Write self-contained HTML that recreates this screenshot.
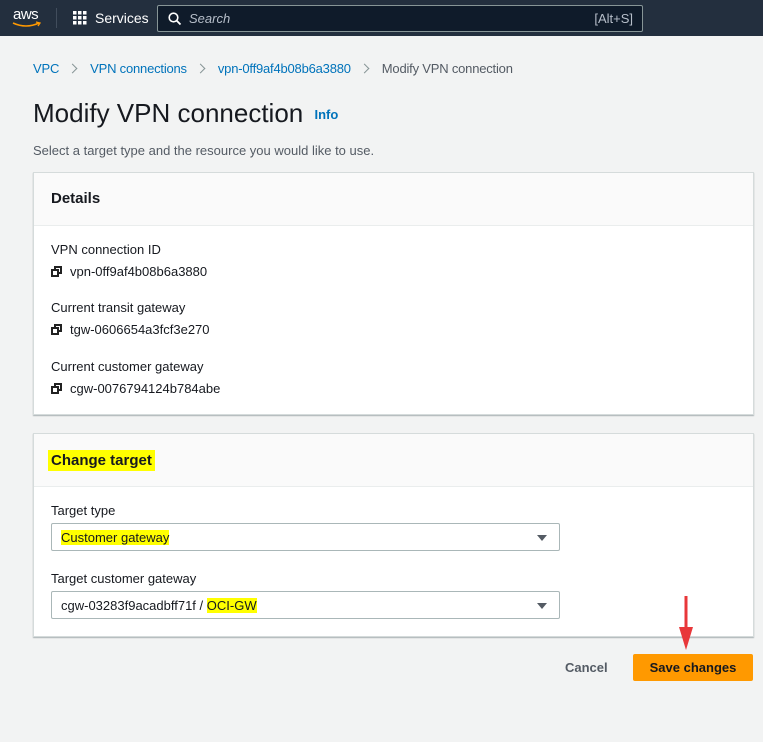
<!DOCTYPE html>
<html><head><meta charset="utf-8"><style>
*{box-sizing:border-box;margin:0;padding:0}
body{width:763px;height:742px;background:#f2f3f3;font-family:"Liberation Sans",sans-serif;color:#16191f;font-size:13px;position:relative;overflow:hidden}
.hdr{position:absolute;left:0;top:0;width:763px;height:36px;background:#232f3e}
.abs{position:absolute}
.blue{color:#0073bb}
.card{position:absolute;left:33px;width:721px;background:#fff;border:1px solid #d5dbdb;box-shadow:0 1px 1px rgba(0,28,36,.3)}
.ch{height:53px;background:#fafafa;border-bottom:1px solid #eaeded;position:relative}
.ch span{position:absolute;left:17px;top:17px;font-size:15px;font-weight:bold}
.lbl{position:absolute;left:17px;font-size:13px;color:#16191f}
.val{position:absolute;left:17px;font-size:13px}
.cp{display:inline-block;width:11px;height:11px;position:relative;margin-right:8px;vertical-align:-1px}
.cp:before{content:"";position:absolute;left:3px;top:0;width:8px;height:8px;border:2px solid #222;box-sizing:border-box}
.cp:after{content:"";position:absolute;left:0;top:3px;width:8px;height:8px;border:2px solid #222;background:#fff;box-sizing:border-box}
.sel{position:absolute;left:17px;width:509px;height:28px;border:1px solid #aab7b8;border-radius:2px}
.sel .t{position:absolute;left:9px;top:6px}
.sel .a{position:absolute;right:12px;top:11px;width:0;height:0;border-left:5px solid transparent;border-right:5px solid transparent;border-top:6px solid #545b64}
.hl{background:#ffff00}
.chev{display:inline-block;width:7px;height:7px;border-right:1.5px solid #879596;border-top:1.5px solid #879596;transform:rotate(45deg);margin:0 14px 1px 10px}
</style></head><body>
<div class="hdr">
 <div class="abs" style="left:13px;top:6px;color:#fff;font-size:15px;letter-spacing:-0.5px">aws</div>
 <svg class="abs" style="left:12px;top:21px" width="30" height="8"><path d="M1 2 Q14 8 27 2" stroke="#ff9900" stroke-width="1.6" fill="none"/><path d="M24 1 L28 2 L26 5" stroke="#ff9900" stroke-width="1.3" fill="none"/></svg>
 <div class="abs" style="left:56px;top:8px;width:1px;height:20px;background:#414d5c"></div>
 <svg class="abs" style="left:73px;top:11px" width="14" height="14"><g fill="#fff"><rect x="0" y="0" width="3.5" height="3.5"/><rect x="5" y="0" width="3.5" height="3.5"/><rect x="10" y="0" width="3.5" height="3.5"/><rect x="0" y="5" width="3.5" height="3.5"/><rect x="5" y="5" width="3.5" height="3.5"/><rect x="10" y="5" width="3.5" height="3.5"/><rect x="0" y="10" width="3.5" height="3.5"/><rect x="5" y="10" width="3.5" height="3.5"/><rect x="10" y="10" width="3.5" height="3.5"/></g></svg>
 <div class="abs" style="left:95px;top:10px;color:#fff;font-size:14px">Services</div>
 <div class="abs" style="left:157px;top:5px;width:486px;height:27px;background:#0f1b2a;border:1px solid #879596;border-radius:2px">
  <svg class="abs" style="left:10px;top:6px" width="14" height="14"><circle cx="5.5" cy="5.5" r="4.3" stroke="#fff" stroke-width="1.6" fill="none"/><path d="M8.8 8.8 L12.5 12.5" stroke="#fff" stroke-width="1.8"/></svg>
  <div class="abs" style="left:31px;top:5px;color:#b6bec9;font-style:italic;font-size:13px">Search</div>
  <div class="abs" style="right:9px;top:5px;color:#b6bec9;font-size:13px">[Alt+S]</div>
 </div>
</div>
<div class="abs" style="top:61px;left:33px;font-size:13px;white-space:nowrap;letter-spacing:-0.2px"><span class="blue">VPC</span><span class="chev"></span><span class="blue">VPN connections</span><span class="chev"></span><span class="blue">vpn-0ff9af4b08b6a3880</span><span class="chev"></span><span style="color:#545b64">Modify VPN connection</span></div>
<div class="abs" style="top:98px;left:33px;font-size:26px;color:#16191f">Modify VPN connection <span class="blue" style="font-size:13px;font-weight:bold;vertical-align:3px;margin-left:4px">Info</span></div>
<div class="abs" style="top:143px;left:33px;font-size:13px;color:#545b64">Select a target type and the resource you would like to use.</div>

<div class="card" style="top:172px;height:243px">
 <div class="ch"><span>Details</span></div>
 <div class="lbl" style="top:69px">VPN connection ID</div>
 <div class="val" style="top:91px"><span class="cp"></span>vpn-0ff9af4b08b6a3880</div>
 <div class="lbl" style="top:127px">Current transit gateway</div>
 <div class="val" style="top:149px"><span class="cp"></span>tgw-0606654a3fcf3e270</div>
 <div class="lbl" style="top:186px">Current customer gateway</div>
 <div class="val" style="top:208px"><span class="cp"></span>cgw-0076794124b784abe</div>
</div>

<div class="card" style="top:433px;height:204px">
 <div class="ch"><span class="hl" style="left:14px;top:16px;padding:2px 3px">Change target</span></div>
 <div class="lbl" style="top:69px">Target type</div>
 <div class="sel" style="top:89px"><span class="t"><span class="hl">Customer gateway</span></span><span class="a"></span></div>
 <div class="lbl" style="top:137px">Target customer gateway</div>
 <div class="sel" style="top:157px"><span class="t">cgw-03283f9acadbff71f / <span class="hl">OCI-GW</span></span><span class="a"></span></div>
</div>

<div class="abs" style="left:565px;top:660px;font-weight:bold;color:#545b64;font-size:13px">Cancel</div>
<div class="abs" style="left:633px;top:654px;width:120px;height:27px;background:#ff9900;border-radius:2px;font-weight:bold;font-size:13px;text-align:center;line-height:27px;color:#16191f">Save changes</div>
<svg class="abs" style="left:677px;top:595px" width="18" height="58"><path d="M9 1 L9 40" stroke="#e8373a" stroke-width="3"/><path d="M2 32 L9 55 L16 32 Z" fill="#e8373a"/></svg>
</body></html>
